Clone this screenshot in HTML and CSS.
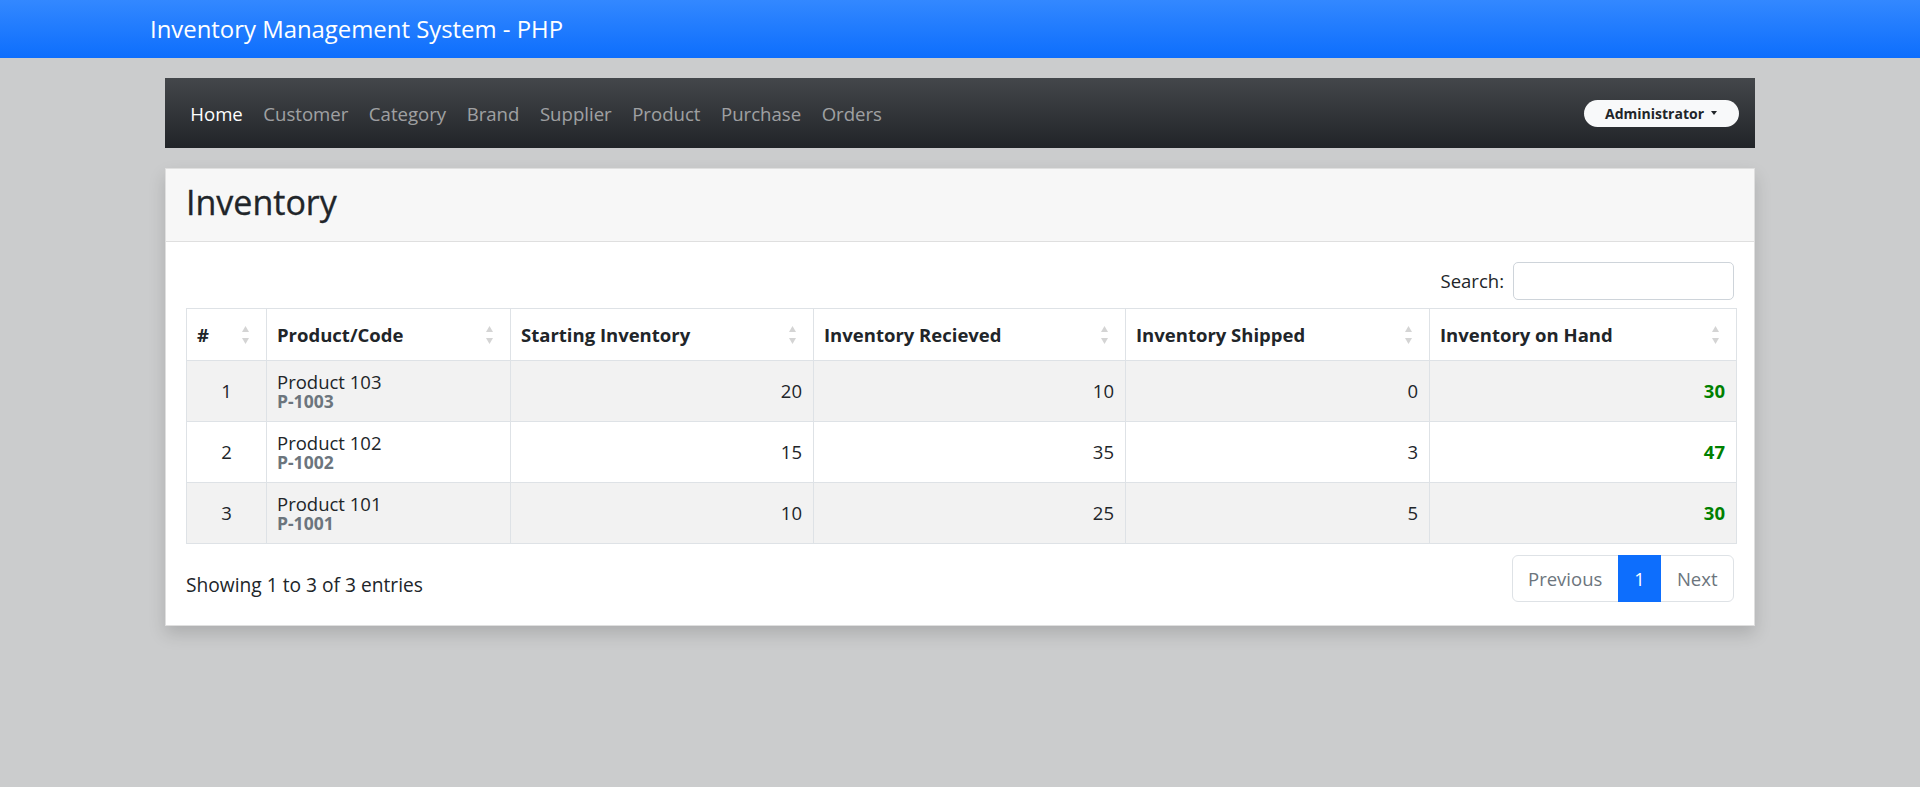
FILE: index.html
```html
<!DOCTYPE html>
<html lang="en">
<head>
<meta charset="utf-8">
<title>Inventory Management System - PHP</title>
<link rel="stylesheet" href="styles.css">
</head>
<body>
<header class="topbar">
  <div class="topbar-inner"><span class="brand">Inventory Management System - PHP</span></div>
</header>
<main class="container">
  <nav class="navbar">
    <ul class="nav-links">
      <li><a class="nav-link active" href="#">Home</a></li>
      <li><a class="nav-link" href="#">Customer</a></li>
      <li><a class="nav-link" href="#">Category</a></li>
      <li><a class="nav-link" href="#">Brand</a></li>
      <li><a class="nav-link" href="#">Supplier</a></li>
      <li><a class="nav-link" href="#">Product</a></li>
      <li><a class="nav-link" href="#">Purchase</a></li>
      <li><a class="nav-link" href="#">Orders</a></li>
    </ul>
    <button class="user-btn" type="button">Administrator<span class="caret"></span></button>
  </nav>

  <section class="card">
    <div class="card-header"><h3 class="card-title">Inventory</h3></div>
    <div class="card-body">
      <div class="dt-top">
        <label class="search">Search:<input class="search-input" type="search"></label>
      </div>
      <table class="dt">
        <colgroup>
          <col class="w-idx"><col class="w-prod"><col class="w-start"><col class="w-recv"><col class="w-ship"><col>
        </colgroup>
        <thead>
          <tr>
            <th><div class="th-in"><span>#</span><svg class="sort" width="7" height="18" viewBox="0 0 7 18"><path d="M3.5 0L7 6H0z"/><path d="M0 12h7l-3.5 6z"/></svg></div></th>
            <th><div class="th-in"><span>Product/Code</span><svg class="sort" width="7" height="18" viewBox="0 0 7 18"><path d="M3.5 0L7 6H0z"/><path d="M0 12h7l-3.5 6z"/></svg></div></th>
            <th><div class="th-in"><span>Starting Inventory</span><svg class="sort" width="7" height="18" viewBox="0 0 7 18"><path d="M3.5 0L7 6H0z"/><path d="M0 12h7l-3.5 6z"/></svg></div></th>
            <th><div class="th-in"><span>Inventory Recieved</span><svg class="sort" width="7" height="18" viewBox="0 0 7 18"><path d="M3.5 0L7 6H0z"/><path d="M0 12h7l-3.5 6z"/></svg></div></th>
            <th><div class="th-in"><span>Inventory Shipped</span><svg class="sort" width="7" height="18" viewBox="0 0 7 18"><path d="M3.5 0L7 6H0z"/><path d="M0 12h7l-3.5 6z"/></svg></div></th>
            <th><div class="th-in"><span>Inventory on Hand</span><svg class="sort" width="7" height="18" viewBox="0 0 7 18"><path d="M3.5 0L7 6H0z"/><path d="M0 12h7l-3.5 6z"/></svg></div></th>
          </tr>
        </thead>
        <tbody>
          <tr>
            <td class="idx">1</td>
            <td class="prod"><span class="pname">Product 103</span><span class="pcode">P-1003</span></td>
            <td class="num">20</td>
            <td class="num">10</td>
            <td class="num">0</td>
            <td class="num onhand">30</td>
          </tr>
          <tr>
            <td class="idx">2</td>
            <td class="prod"><span class="pname">Product 102</span><span class="pcode">P-1002</span></td>
            <td class="num">15</td>
            <td class="num">35</td>
            <td class="num">3</td>
            <td class="num onhand">47</td>
          </tr>
          <tr>
            <td class="idx">3</td>
            <td class="prod"><span class="pname">Product 101</span><span class="pcode">P-1001</span></td>
            <td class="num">10</td>
            <td class="num">25</td>
            <td class="num">5</td>
            <td class="num onhand">30</td>
          </tr>
        </tbody>
      </table>
      <div class="dt-bottom">
        <div class="info">Showing 1 to 3 of 3 entries</div>
        <ul class="pagination">
          <li class="page-item first"><a class="page-link" href="#">Previous</a></li>
          <li class="page-item active"><a class="page-link" href="#">1</a></li>
          <li class="page-item last"><a class="page-link" href="#">Next</a></li>
        </ul>
      </div>
    </div>
  </section>
</main>
</body>
</html>
```

FILE: styles.css
```css
* { box-sizing: border-box; }

html, body {
  margin: 0;
  padding: 0;
}

body {
  background: #cbcccd;
  font-family: "Open Sans", "Noto Sans", sans-serif;
  font-size: 18.5px;
  line-height: 1.5;
  color: #212529;
  min-height: 100vh;
}

a { text-decoration: none; }

/* Top blue bar */
.topbar {
  height: 58px;
  background: linear-gradient(180deg, #3388ff 0%, #0d6efd 100%);
}

.topbar-inner {
  max-width: 1620px;
  margin: 0 auto;
}

.brand {
  display: block;
  color: #fff;
  font-size: 23.9px;
  line-height: 58px;
}

/* Container */
.container {
  width: 1590px;
  margin: 20px auto 0;
}

/* Navbar */
.navbar {
  height: 70px;
  display: flex;
  align-items: center;
  justify-content: space-between;
  padding: 0 16px 0 15px;
  background: linear-gradient(180deg, #44474b 0%, #212428 100%);
}

.nav-links {
  display: flex;
  list-style: none;
  margin: 0;
  padding: 2px 0 0;
}

.nav-link {
  display: block;
  padding: 0 10.25px;
  color: rgba(255, 255, 255, 0.55);
  font-size: 18.6px;
  line-height: 28px;
}

.nav-link.active { color: #fff; }

.user-btn {
  display: flex;
  align-items: center;
  height: 27px;
  padding: 0 22px 0 21px;
  border: none;
  border-radius: 14px;
  background: #f8f9fa;
  color: #212529;
  font-family: "Open Sans", "Noto Sans", sans-serif;
  font-weight: 700;
  font-size: 14px;
  line-height: 27px;
}

.caret {
  display: inline-block;
  margin-left: 7px;
  width: 0;
  height: 0;
  border-top: 4px solid #212529;
  border-left: 3.5px solid transparent;
  border-right: 3.5px solid transparent;
}

/* Card */
.card {
  margin-top: 20px;
  background: #fff;
  border: 1px solid rgba(0, 0, 0, 0.125);
  box-shadow: 0 8px 16px rgba(0, 0, 0, 0.15);
}

.card-header {
  background: #f7f7f7;
  border-bottom: 1px solid #dfdfdf;
  padding: 13px 20px 18px;
}

.card-title {
  margin: 0;
  font-size: 34px;
  font-weight: 500;
  line-height: 41px;
  color: #212529;
  -webkit-text-stroke: 0.35px #212529;
}

.card-body {
  padding: 20px 17px 23px 20px;
}

/* DataTable top */
.dt-top {
  display: flex;
  justify-content: flex-end;
  margin: 0 3px 8px 0;
}

.search {
  display: flex;
  align-items: center;
  gap: 9px;
}

.search-input {
  width: 221px;
  height: 38px;
  border: 1px solid #ced4da;
  border-radius: 5px;
  background: #fff;
}

/* Table */
.dt {
  width: 100%;
  border-collapse: collapse;
  table-layout: fixed;
}

.w-idx { width: 80px; }
.w-prod { width: 244px; }
.w-start { width: 303px; }
.w-recv { width: 312px; }
.w-ship { width: 304px; }

.dt th,
.dt td {
  border: 1px solid #dee2e6;
}

.dt th {
  padding: 12px 10px;
  line-height: 27px;
  text-align: left;
  font-weight: 700;
}

.th-in {
  display: flex;
  align-items: center;
  justify-content: space-between;
}

.sort {
  flex: none;
  margin-right: 7px;
  fill: #d4d4d4;
}

.dt td {
  padding: 10px;
  vertical-align: middle;
}

.dt tbody tr:nth-child(odd) td { background: #f2f2f2; }

.idx { text-align: center; }

.dt td.num {
  text-align: right;
  padding-right: 11px;
}

.onhand {
  color: #008000;
  font-weight: 700;
}

.pname {
  display: block;
  line-height: 21px;
}

.pcode {
  display: block;
  line-height: 19px;
  font-size: 17.5px;
  font-weight: 700;
  color: #6c757d;
}

/* DataTable bottom */
.dt-bottom {
  display: flex;
  justify-content: space-between;
  align-items: flex-start;
  margin-top: 11px;
}

.info {
  padding-top: 16px;
  font-size: 19.2px;
}

.pagination {
  display: flex;
  list-style: none;
  margin: 0 3px 0 0;
  padding: 0;
}

.page-link {
  display: block;
  padding: 0 15.5px;
  line-height: 45px;
  border: 1px solid #dee2e6;
  color: #6c757d;
  background: #fff;
}

.page-item + .page-item .page-link { margin-left: -1px; }

.page-item.first .page-link { border-radius: 6px 0 0 6px; }
.page-item.last .page-link { border-radius: 0 6px 6px 0; }

.page-item.active .page-link {
  position: relative;
  background: #0d6efd;
  border-color: #0d6efd;
  color: #fff;
}
```
